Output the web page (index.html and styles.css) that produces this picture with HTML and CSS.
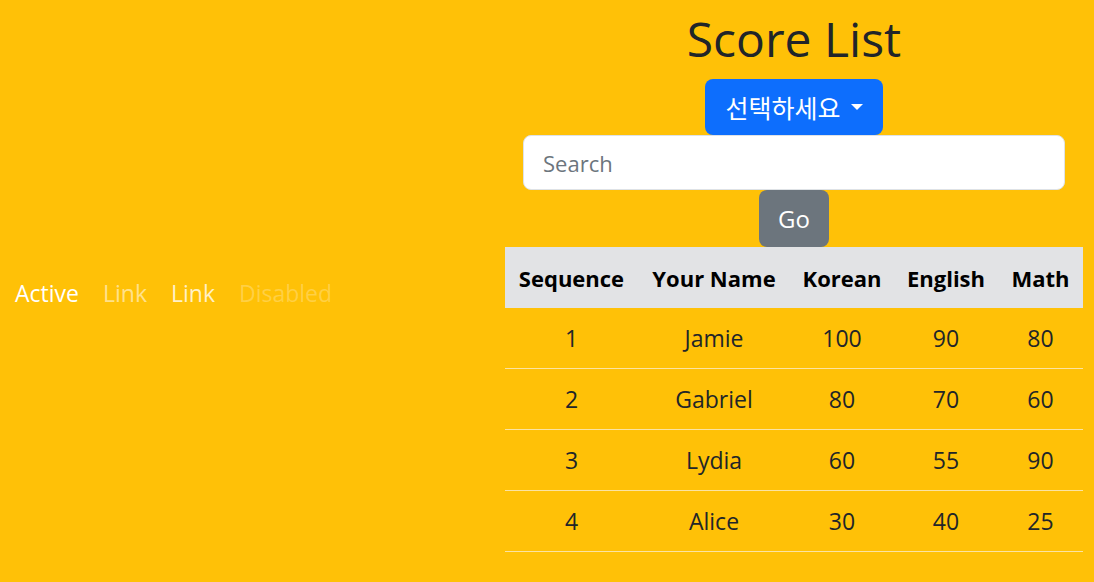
FILE: index.html
```html
<!DOCTYPE html>
<html lang="ko">
<head>
<meta charset="utf-8">
<title>Score List</title>
<link rel="stylesheet" href="styles.css">
</head>
<body>
<div class="page">
  <nav class="side-nav">
    <a class="nav-link active" href="#">Active</a>
    <a class="nav-link dim" href="#">Link</a>
    <a class="nav-link soft" href="#">Link</a>
    <a class="nav-link disabled" href="#">Disabled</a>
  </nav>
  <main class="score">
    <h1 class="title">Score List</h1>
    <button class="btn btn-primary dropdown-toggle" type="button">선택하세요<span class="caret"></span></button>
    <input class="search" type="text" placeholder="Search">
    <button class="btn btn-secondary" type="button">Go</button>
    <table class="score-table">
      <colgroup>
        <col class="c-seq"><col class="c-name"><col class="c-ko"><col class="c-en"><col class="c-math">
      </colgroup>
      <thead>
        <tr><th>Sequence</th><th>Your Name</th><th>Korean</th><th>English</th><th>Math</th></tr>
      </thead>
      <tbody>
        <tr><td>1</td><td>Jamie</td><td>100</td><td>90</td><td>80</td></tr>
        <tr><td>2</td><td>Gabriel</td><td>80</td><td>70</td><td>60</td></tr>
        <tr><td>3</td><td>Lydia</td><td>60</td><td>55</td><td>90</td></tr>
        <tr><td>4</td><td>Alice</td><td>30</td><td>40</td><td>25</td></tr>
      </tbody>
    </table>
  </main>
</div>
</body>
</html>
```
FILE: styles.css
```css
html, body {
  margin: 0;
  padding: 0;
  overflow: hidden;
}
body {
  background: #ffc107;
  color: #212529;
  font-family: "Open Sans", "Noto Sans CJK KR", sans-serif;
  font-size: 20px;
}
.page {
  display: flex;
  align-items: stretch;
  height: 582px;
}
.side-nav {
  flex: 1;
  display: flex;
  align-items: center;
  padding: 4px 0 0 3px;
}
.nav-link {
  text-decoration: none;
  padding: 10px 12px;
  font-size: 23px;
  line-height: 32px;
}
.nav-link.active { color: #ffffff; }
.nav-link.dim { color: rgba(255, 255, 255, 0.55); }
.nav-link.soft { color: rgba(255, 255, 255, 0.78); }
.nav-link.disabled { color: rgba(255, 255, 255, 0.25); }

.score {
  width: 578px;
  margin-right: 11px;
  display: flex;
  flex-direction: column;
  align-items: center;
}
.title {
  margin: 4px 0 0;
  font-size: 48px;
  line-height: 70px;
  font-weight: 400;
  height: 75px;
}
.btn {
  border: 0;
  font-family: "Open Sans", "Noto Sans CJK KR", sans-serif;
  color: #fff;
  border-radius: 8px;
  cursor: pointer;
}
.btn-primary {
  background: #0d6efd;
  height: 56px;
  width: 178px;
  font-size: 25px;
  display: flex;
  align-items: center;
  justify-content: center;
  gap: 4px;
  padding: 0;
}
.caret {
  display: inline-block;
  width: 0;
  height: 0;
  border-left: 6px solid transparent;
  border-right: 6px solid transparent;
  border-top: 6px solid #fff;
  margin-left: 6px;
}
.search {
  box-sizing: border-box;
  width: 542px;
  height: 55px;
  border: 1px solid #dee2e6;
  border-radius: 8px;
  background: #fff;
  padding: 0 19px;
  font-family: "Open Sans", sans-serif;
  font-size: 22px;
  color: #212529;
}
.search::placeholder { color: #6c757d; }
.btn-secondary {
  background: #6c757d;
  width: 70px;
  height: 57px;
  font-size: 24px;
  padding: 0;
}
.score-table {
  width: 578px;
  border-collapse: collapse;
  table-layout: fixed;
  text-align: center;
  font-size: 23px;
}
.c-seq { width: 133px; }
.c-name { width: 152px; }
.c-ko { width: 104px; }
.c-en { width: 104px; }
.c-math { width: 85px; }
.score-table th {
  background: #e2e3e5;
  color: #000;
  font-weight: 700;
  font-size: 22px;
  height: 61px;
  padding: 0;
  white-space: nowrap;
}
.score-table td {
  height: 60px;
  padding: 0;
  border-bottom: 1px solid #fbe3a3;
}
```
